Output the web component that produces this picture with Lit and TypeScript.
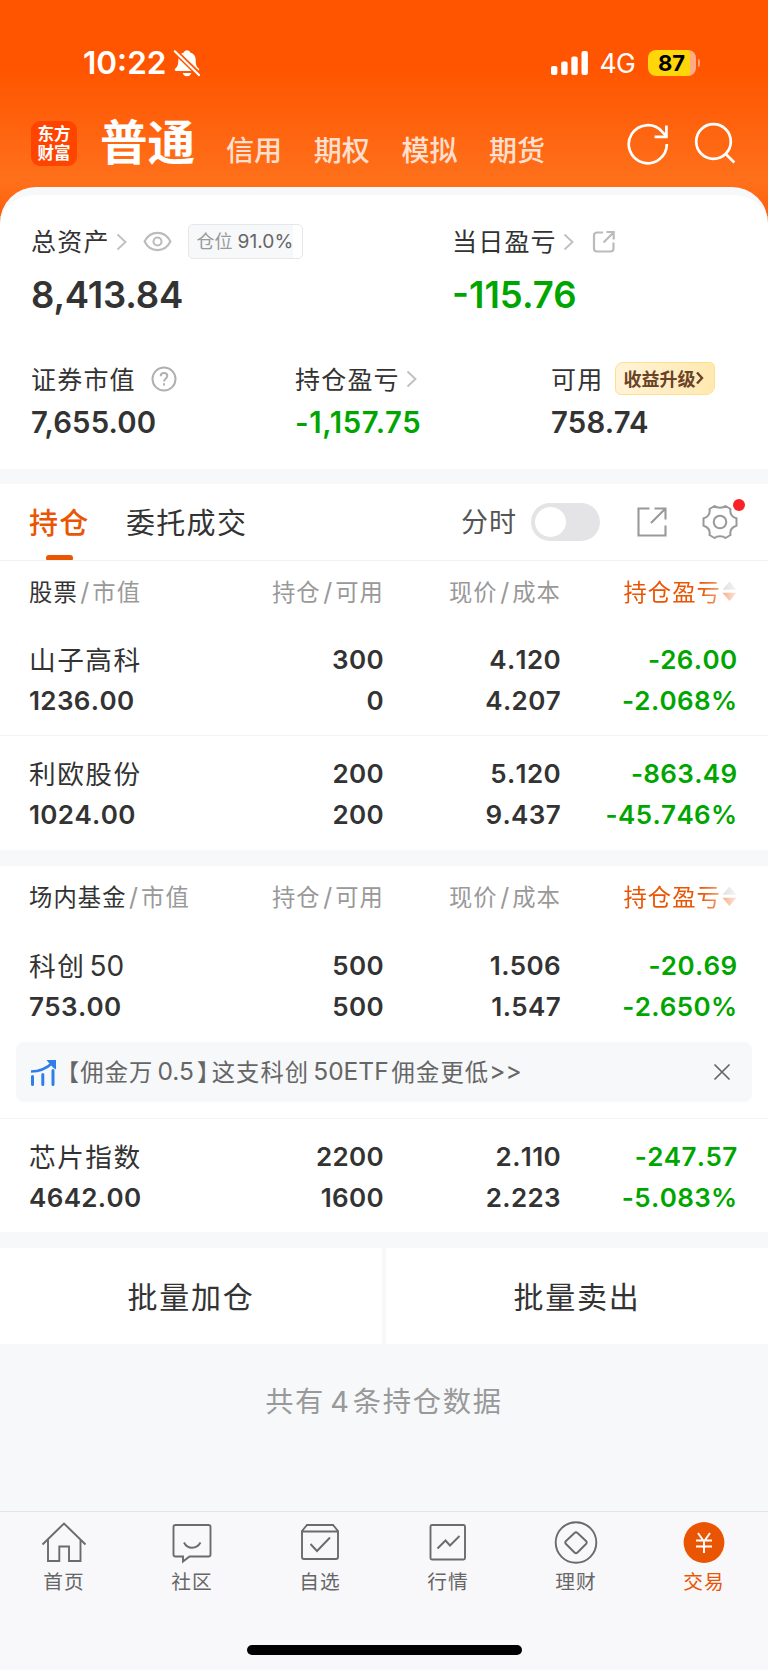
import { LitElement, html, css, svg } from "lit";
import { customElement, property } from "lit/decorators.js";

interface Holding {
  name: string;
  num?: string;
  value: string;
  qty: string;
  usable: string;
  price: string;
  cost: string;
  profit: string;
  rate: string;
}

const STOCKS: Holding[] = [
  { name: "山子高科", value: "1236.00", qty: "300", usable: "0", price: "4.120", cost: "4.207", profit: "-26.00", rate: "-2.068%" },
  { name: "利欧股份", value: "1024.00", qty: "200", usable: "200", price: "5.120", cost: "9.437", profit: "-863.49", rate: "-45.746%" },
];
const KC50: Holding = { name: "科创", num: "50", value: "753.00", qty: "500", usable: "500", price: "1.506", cost: "1.547", profit: "-20.69", rate: "-2.650%" };
const CHIP: Holding = { name: "芯片指数", value: "4642.00", qty: "2200", usable: "1600", price: "2.110", cost: "2.223", profit: "-247.57", rate: "-5.083%" };

const chevron = html`<svg class="chev" width="12" height="18" viewBox="0 0 12 18" fill="none" stroke="#c0c0c0" stroke-width="1.9"><path d="M1.5 1.5 9.5 9l-8 7.5"/></svg>`;

@customElement("status-bar")
class StatusBar extends LitElement {
  static styles = css`
    :host { display: flex; align-items: center; height: 105px; padding: 20px 68px 0 83px; box-sizing: border-box; color: #fff; font-family: Inter, sans-serif; }
    .time { font-size: 31.500px; font-weight: 600; letter-spacing: 0; line-height: 40px; }
    .bell { margin-left: 7px; }
    .signal { margin-left: auto; }
    .net { font-size: 26.500px; line-height: 40px; margin: 1px 0 0 12px; letter-spacing: -0.500px; width: 36px; white-space: nowrap; }
    .batt { margin-left: 12px; width: 48px; height: 26px; border-radius: 8px; background: linear-gradient(90deg, #ffd60a 42px, #ffab85 42px); color: #000; font-size: 22px; font-weight: 700; line-height: 26px; text-align: center; }
    .nub { margin-left: 2px; width: 2.500px; height: 8px; border-radius: 0 3px 3px 0; background: #ffa27a; }
  `;
  render() {
    return html`
      <span class="time">10:22</span>
      <svg class="bell" width="28" height="28" viewBox="0 0 28 28">
        <path fill="#fff" d="M14 1.2c1.8 0 2.9 1.1 3.2 2.300 4 1.200 5.500 4 5.500 7.500 0 5 .8 6.500 2.800 8.300 1.200 1 .9 2.700-.7 2.700H3.200c-1.600 0-1.900-1.700-.7-2.700 2-1.800 2.800-3.300 2.800-8.300 0-3.500 1.500-6.300 5.500-7.500C11.100 2.300 12.200 1.200 14 1.200zM9.700 24h8.600c-.5 2-2.200 3.300-4.300 3.300S10.200 26 9.700 24z"/>
        <path stroke="#ff5600" stroke-width="5.400" d="M1 1.500 26.500 26"/>
        <path stroke="#fff" stroke-width="2.200" stroke-linecap="round" d="M1.800 2.300 26 26"/>
      </svg>
      <svg class="signal" width="37" height="24" viewBox="0 0 37 24" fill="#fff">
        <rect x="0" y="15" width="6.400" height="9" rx="2"/><rect x="10.200" y="10.500" width="6.400" height="13.500" rx="2"/>
        <rect x="20.300" y="5.500" width="6.400" height="18.500" rx="2"/><rect x="30.500" y="0" width="6.400" height="24" rx="2"/>
      </svg>
      <span class="net">4G</span>
      <span class="batt">87</span><span class="nub"></span>
    `;
  }
}

@customElement("account-bar")
class AccountBar extends LitElement {
  static styles = css`
    :host { display: flex; align-items: flex-start; height: 82px; padding: 0 31px; box-sizing: border-box; color: #fff; font-family: "Noto Sans CJK SC", sans-serif; white-space: nowrap; }
    .logo { margin-top: 16px; width: 46px; height: 45px; border-radius: 9px; background: #ff4400; display: grid; align-content: center; justify-content: center; font-size: 16.500px; font-weight: 700; line-height: 19px; padding-bottom: 1px; box-sizing: border-box; }
    .main { margin: 5px 0 0 23px; font-size: 47.500px; line-height: 60px; font-weight: 700; width: 126px; }
    .tab { margin-top: 23.500px; font-size: 28px; line-height: 40px; font-weight: 500; width: 87.700px; color: #ffe0d0; }
    .icons { margin: 17px 0 0 auto; display: flex; }
  `;
  render() {
    return html`
      <div class="logo"><span>东方</span><span>财富</span></div>
      <span class="main">普通</span>
      ${["信用", "期权", "模拟", "期货"].map((t) => html`<span class="tab">${t}</span>`)}
      <svg class="icons" width="110" height="44" viewBox="0 0 110 44" fill="none" stroke="#fff" stroke-width="2.700">
        <path d="M39.800 22a19 19 0 1 1-4.800-12.400L39 13.700"/><path d="M39.400 3.500v11.300H27.500"/>
        <circle cx="86.500" cy="19.500" r="17.300"/><path d="M98.500 31.800 107.300 40.500"/>
      </svg>
    `;
  }
}

@customElement("asset-summary")
class AssetSummary extends LitElement {
  static styles = css`
    :host { display: block; height: 282px; box-sizing: border-box; border-top: 8px solid #f7f8fa; border-radius: 36px 36px 0 0; background: #fff; padding: 27.500px 0 0 31px; color: #333; }
    .row { display: grid; }
    .two { grid-template-columns: 421px 1fr; }
    .three { grid-template-columns: 264px 256px 1fr; margin-top: 31.500px; }
    .label { display: flex; align-items: center; height: 36px; font: 25px/35px "Noto Sans CJK SC", sans-serif; letter-spacing: 1.200px; white-space: nowrap; }
    .label svg, .badge { position: relative; top: 1px; }
    .chev { margin-left: 6px; }
    .eye { margin-left: 15px; }
    .badge { margin-left: 16px; width: 115px; height: 35px; box-sizing: border-box; border: 1.500px solid #e6e7ea; border-radius: 5px; background: linear-gradient(90deg, #f7f8fa 104px, #fff 104px); display: flex; align-items: center; padding-left: 8px; font: 19.200px/33px Inter, "Noto Sans CJK SC", sans-serif; letter-spacing: 0; color: #666; }
    .badge i { font-style: normal; font-size: 18px; color: #999; margin-right: 5px; }
    .share { margin-left: 17px; }
    .help { margin-left: 15.500px; }
    .up { margin-left: 12px; width: 99.500px; height: 33px; border-radius: 8px 5px 9px 6px; box-sizing: border-box; border: 1.500px solid #ffe08a; background: linear-gradient(90deg, #fff3d9, #ffe9b0); color: #6b4226; display: flex; align-items: center; padding-left: 7px; font: 700 18px/29px "Noto Sans CJK SC", sans-serif; letter-spacing: 0; }
    .up svg { top: 0; }
    .big { font: 600 36.500px/68px Inter, sans-serif; padding-top: 2px; letter-spacing: -0.200px; }
    .big.green { letter-spacing: 0; }
    .mid { font: 600 29.300px/50px Inter, sans-serif; padding-top: 2px; letter-spacing: 0.200px; }
    .mid.green { letter-spacing: 0.650px; }
    .green { color: #00a600; }
  `;
  render() {
    return html`
      <div class="row two">
        <div>
          <div class="label">总资产${chevron}
            <svg class="eye" width="29" height="21" viewBox="0 0 30 22" fill="none" stroke="#bbb" stroke-width="2.200"><path d="M1.500 11C4.500 5 9.500 2 15 2s10.500 3 13.500 9c-3 6-8 9-13.500 9S4.500 17 1.500 11z"/><circle cx="15" cy="11" r="4.200"/></svg>
            <span class="badge"><i>仓位</i>91.0%</span>
          </div>
          <div class="big">8,413.84</div>
        </div>
        <div>
          <div class="label">当日盈亏${chevron}
            <svg class="share" width="24" height="24" viewBox="0 0 24 24" fill="none" stroke="#bbb" stroke-width="2.200"><path d="M11 2.500H5A3 3 0 0 0 2 5.500v13a3 3 0 0 0 3 3h13.500a3 3 0 0 0 3-3v-6"/><path d="M11.500 12.500 21.500 2.500M14.500 2h7.200v7.500"/></svg>
          </div>
          <div class="big green">-115.76</div>
        </div>
      </div>
      <div class="row three">
        <div>
          <div class="label">证券市值
            <svg class="help" width="26" height="26" viewBox="0 0 26 26" fill="none" stroke="#b0b0b0" stroke-width="2"><circle cx="13" cy="13" r="11.500"/><path d="M9.700 10.300c0-2 1.400-3.300 3.300-3.300s3.300 1.200 3.300 3c0 2.300-3.300 2.600-3.300 5.500M13 17.300v2.200"/></svg>
          </div>
          <div class="mid">7,655.00</div>
        </div>
        <div>
          <div class="label">持仓盈亏${chevron}</div>
          <div class="mid green">-1,157.75</div>
        </div>
        <div>
          <div class="label">可用<span class="up">收益升级<svg width="9" height="14" viewBox="0 0 9 14" fill="none" stroke="#6b4226" stroke-width="2.400"><path d="M2 1.500 7 7l-5 5.500"/></svg></span></div>
          <div class="mid">758.74</div>
        </div>
      </div>
    `;
  }
}

@customElement("holding-tabs")
class HoldingTabs extends LitElement {
  static styles = css`
    :host { display: flex; align-items: center; height: 77px; box-sizing: border-box; border-bottom: 1px solid #f0f1f3; background: #fff; padding: 0 29px; font-family: "Noto Sans CJK SC", sans-serif; white-space: nowrap; color: #333; }
    .tab { font-size: 29px; line-height: 74px; letter-spacing: 1.300px; width: 97px; height: 76px; position: relative; }
    .on { color: #ea5504; font-weight: 500; }
    .on::after { content: ""; position: absolute; left: 17px; bottom: 0; width: 27px; height: 5px; border-radius: 3px 3px 1px 1px; background: #ea5504; }
    .time { margin-left: auto; font-size: 27px; line-height: 74px; height: 76px; letter-spacing: 1px; color: #555; }
    .switch { margin-left: 14px; width: 69px; height: 38px; border-radius: 19px; background: #e4e4e6; box-sizing: border-box; padding: 4px; }
    .knob { width: 31px; height: 30px; border-radius: 50%; background: #fff; }
    .share { margin-left: 35.500px; }
    .gear { margin-left: 33.500px; }
    .wrap { position: relative; height: 38px; }
    .dot { position: absolute; right: -6px; top: -4px; width: 12px; height: 12px; border-radius: 50%; background: #f92224; }
  `;
  render() {
    return html`
      <span class="tab on">持仓</span><span class="tab">委托成交</span>
      <span class="time">分时</span>
      <span class="switch"><div class="knob"></div></span>
      <svg class="share" width="32" height="32" viewBox="0 0 32 32" fill="none" stroke="#999" stroke-width="2.100"><path d="M13.500 2.500H2.500v27h27V19.500"/><path d="M15 17 29 3M18.500 2.500h11v11"/></svg>
      <span class="wrap gear">
        <svg width="38" height="38" viewBox="0 0 38 38" fill="none" stroke="#999" stroke-width="2" stroke-linejoin="round"><path d="M13.500 3C16 5.200 22 5.200 24.500 3L29.500 6C28.700 10.500 31 14 35.500 15.300V22.700C31 24 28.700 27.500 29.500 32L24.500 35C22 32.800 16 32.800 13.500 35L8.500 32C9.300 27.500 7 24 2.500 22.700V15.300C7 14 9.300 10.500 8.500 6Z"/><circle cx="19" cy="19" r="6.300"/></svg>
        <span class="dot"></span>
      </span>
    `;
  }
}

@customElement("holding-head")
class HoldingHead extends LitElement {
  @property() kind = "";
  static styles = css`
    :host { display: grid; grid-template-columns: 200px 155px 177px 176px; height: 62px; background: #fff; padding-left: 29px; font: 23.300px/60px "Noto Sans CJK SC", sans-serif; letter-spacing: 1.100px; color: #999; white-space: nowrap; }
    :host([short]) { height: 61px; }
    span { text-align: right; }
    .first { text-align: left; }
    b { font-weight: 400; color: #333; }
    i { font: 25px/60px Inter, sans-serif; margin: 0 3px 0 2.500px; letter-spacing: 0; }
    .sort { color: #ea5504; display: flex; justify-content: flex-end; align-items: center; height: 60px; -webkit-mask-image: linear-gradient(90deg, #000 140px, rgba(0, 0, 0, 0.120) 176px); mask-image: linear-gradient(90deg, #000 140px, rgba(0, 0, 0, 0.120) 176px); }
    svg { margin-left: 1px; }
  `;
  render() {
    return html`
      <span class="first"><b>${this.kind}</b><i>/</i>市值</span>
      <span>持仓<i>/</i>可用</span><span>现价<i>/</i>成本</span>
      <span class="sort">持仓盈亏<svg width="15" height="22" viewBox="0 0 15 22"><path fill="#bbb" d="M7.500 1.500 14.500 9.800H.500z"/><path fill="#ea5504" d="M7.500 21 .500 12.700h14z"/></svg></span>
    `;
  }
}

@customElement("holding-row")
class HoldingRow extends LitElement {
  @property({ attribute: false }) item!: Holding;
  static styles = css`
    :host { display: grid; grid-template-columns: 200px 155px 177px 176.500px; height: 114px; box-sizing: border-box; background: #fff; padding: 17px 0 0 29px; font: 600 26px/41px Inter, sans-serif; font-kerning: none; color: #333; white-space: nowrap; letter-spacing: 0.350px; }
    :host([line]) { border-bottom: 1.500px solid #f3f4f6; }
    :host([short]) { height: 113px; }
    div { text-align: right; }
    p { margin: 0; height: 41px; }
    .first { text-align: left; }
    .name { font: 400 26.700px/39px "Noto Sans CJK SC", sans-serif; letter-spacing: 1.500px; }
    .name i { font: 400 28px/39px Inter, sans-serif; letter-spacing: 0; margin-left: 4px; }
    .green { color: #00a600; }
  `;
  render() {
    const h = this.item;
    return html`
      <div class="first"><p class="name">${h.name}${h.num ? html`<i>${h.num}</i>` : ""}</p><p>${h.value}</p></div>
      <div><p>${h.qty}</p><p>${h.usable}</p></div>
      <div><p>${h.price}</p><p>${h.cost}</p></div>
      <div class="green"><p>${h.profit}</p><p>${h.rate}</p></div>
    `;
  }
}

@customElement("promo-notice")
class PromoNotice extends LitElement {
  static styles = css`
    :host { display: block; background: #fff; padding: 0 16px 16px; border-bottom: 1.500px solid #f3f4f6; }
    .box { display: flex; align-items: center; height: 60px; border-radius: 8px; background: #f7f8fa; padding: 0 21px 0 14px; font: 23.300px/59px "Noto Sans CJK SC", sans-serif; letter-spacing: 1.100px; color: #666; white-space: nowrap; }
    .box > span { height: 60px; }
    .open { margin-left: 10.500px; font-feature-settings: "halt"; }
    .close { margin-right: 2px; font-feature-settings: "halt"; }
    i { font: 24.500px/59px Inter, sans-serif; letter-spacing: 0; margin: 0 3px 0 4px; height: 60px; }
    .more { margin: 0; }
    .x { margin-left: auto; }
  `;
  render() {
    return html`<div class="box">
      <svg width="27" height="27" viewBox="0 0 27 27" fill="none" stroke="#2f7fe8" stroke-width="3"><path d="M2.500 17.500v8M12.800 15.500v10M23 11.500v14" stroke-linecap="round"/><path d="M1 12.500C9 12.500 16 10 23 3.500" stroke-width="2.500"/><path fill="#2f7fe8" stroke="none" d="M16.500 1h9.500v9.500l-2.500-1.500-5-5.500z"/></svg>
      <span class="open">【</span><span>佣金万</span><i>0.5</i><span class="close">】</span><span>这支科创</span><i>50ETF</i><span>佣金更低</span><i class="more">&gt;&gt;</i>
      <svg class="x" width="18" height="18" viewBox="0 0 18 18" stroke="#666" stroke-width="1.700"><path d="m1.500 1.500 15 15m0-15-15 15"/></svg>
    </div>`;
  }
}

const NAV = [
  { t: "首页", g: svg`<path d="M1.500 23.500 23 2.500 44.500 23.500M7 18.500V40H18.300V25.500H28V40H39.500V18.500"/>` },
  { t: "社区", g: svg`<path d="M6.500 4h33a2 2 0 0 1 2 2v27.500a2 2 0 0 1-2 2H20.500L14 40.500V35.500H6.500a2 2 0 0 1-2-2V6a2 2 0 0 1 2-2zM15 21.500c3.500 7 12.500 7 16.500 0"/>` },
  { t: "自选", g: svg`<path d="m5 10 5-6h26l5 6v26a2 2 0 0 1-2 2H7a2 2 0 0 1-2-2zM5 10.500h36M13.500 23l6.500 7 13-13.500"/>` },
  { t: "行情", g: svg`<rect x="5.500" y="4" width="34.500" height="34.500" rx="1.500"/><path d="m12.500 27.500 8-8 4.500 5L34.500 15"/>` },
  { t: "理财", g: svg`<circle cx="23" cy="21.500" r="20.300"/><path d="M21.500 12Q23 10.500 24.500 12L33 20Q34.500 21.500 33 23L24.500 31.500Q23 33 21.500 31.500L13 23Q11.500 21.500 13 20z"/>` },
  { t: "交易", g: svg`<circle cx="23" cy="21.500" r="20.400" fill="#ea5504" stroke="none"/><path stroke="#fff" d="m17 12 6 8.500L29 12M23 20.500V32M15 19.500h16M15 25.500h16"/>` },
];

@customElement("bottom-nav")
class BottomNav extends LitElement {
  static styles = css`
    :host { display: flex; flex-direction: column; align-items: center; height: 159px; box-sizing: border-box; border-top: 1px solid #e3e4e6; background: #f8f8fb; font: 19.700px/32px "Noto Sans CJK SC", sans-serif; letter-spacing: 1px; }
    .items { display: grid; grid-template-columns: repeat(6, 1fr); width: 100%; padding-top: 9px; }
    .item { display: flex; flex-direction: column; align-items: center; color: #666; }
    .on { color: #ea5504; }
    .home { margin: auto 0 15px; width: 275px; height: 10px; border-radius: 5px; background: #000; }
  `;
  render() {
    return html`
      <div class="items">${NAV.map((n, i) => html`<div class="item ${i === 5 ? "on" : ""}"><svg width="46" height="44" viewBox="0 0 46 44" fill="none" stroke="#6b6b6b" stroke-width="1.900">${n.g}</svg><span>${n.t}</span></div>`)}</div>
      <div class="home"></div>
    `;
  }
}

@customElement("app-root")
class AppRoot extends LitElement {
  static styles = css`
    :host { display: block; width: 768px; height: 1670px; overflow: hidden; background: #f7f8fa; }
    .top { background: linear-gradient(180deg, #ff5500 0, #ff5500 70px, #ff701b 180px, #ff5a05 230px); }
    .gap { height: 15px; }
    .gap2 { height: 16px; }
    .actions { display: grid; grid-template-columns: 1fr 1fr; gap: 4px; height: 96px; }
    .act { background: #fff; text-align: center; font: 30px/94px "Noto Sans CJK SC", sans-serif; letter-spacing: 1.700px; color: #333; }
    .total { height: 167px; box-sizing: border-box; padding-top: 33px; text-align: center; font: 28.300px/46px "Noto Sans CJK SC", sans-serif; letter-spacing: 1.700px; color: #999; }
    .total i { font: 29px/46px Inter, sans-serif; margin: 0 4px 0 5px; letter-spacing: 0; }
  `;
  render() {
    return html`
      <div class="top"><status-bar></status-bar><account-bar></account-bar><asset-summary></asset-summary></div>
      <div class="gap"></div>
      <holding-tabs></holding-tabs>
      <holding-head short kind="股票"></holding-head>
      <holding-row line .item=${STOCKS[0]}></holding-row>
      <holding-row .item=${STOCKS[1]}></holding-row>
      <div class="gap2"></div>
      <holding-head kind="场内基金"></holding-head>
      <holding-row .item=${KC50}></holding-row>
      <promo-notice></promo-notice>
      <holding-row short .item=${CHIP}></holding-row>
      <div class="gap2"></div>
      <div class="actions"><div class="act">批量加仓</div><div class="act">批量卖出</div></div>
      <div class="total">共有<i>4</i>条持仓数据</div>
      <bottom-nav></bottom-nav>
    `;
  }
}
